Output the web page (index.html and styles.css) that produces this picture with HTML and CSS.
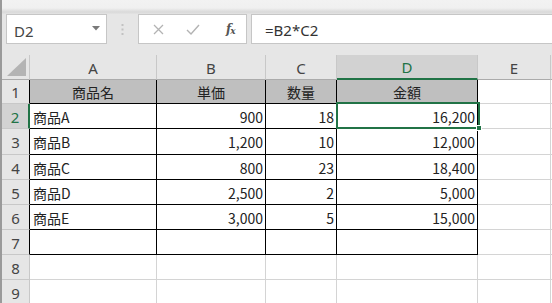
FILE: index.html
```html
<!DOCTYPE html>
<html lang="ja">
<head>
<meta charset="utf-8">
<link rel="stylesheet" href="styles.css">
</head>
<body>
<div class="app">
  <div class="topband"></div>
  <div class="fbar">
    <div class="namebox">
      <span class="nb-text">D2</span>
      <svg class="nb-arrow" width="8" height="5" viewBox="0 0 8 5"><path d="M0 0H8L4 4.5Z" fill="#7a7a7a"/></svg>
    </div>
    <div class="dots">
      <svg width="3" height="11" viewBox="0 0 3 11"><rect x="0.5" y="0" width="2" height="2" fill="#c2c2c2"/><rect x="0.5" y="4.5" width="2" height="2" fill="#c2c2c2"/><rect x="0.5" y="9" width="2" height="2" fill="#c2c2c2"/></svg>
    </div>
    <div class="fnbox">
      <svg class="fn-x" width="11" height="11" viewBox="0 0 11 11"><path d="M1 1L10 10M10 1L1 10" stroke="#b3b3b3" stroke-width="1.3"/></svg>
      <svg class="fn-check" width="14" height="11" viewBox="0 0 14 11"><path d="M1 6L5 10L13 1" stroke="#b3b3b3" stroke-width="1.4" fill="none"/></svg>
      <span class="fn-fx">f<sub>x</sub></span>
    </div>
    <div class="formula">=B2*C2</div>
  </div>
  <div class="sheet">
    <div class="grid">
      <div class="c corner"><svg width="19" height="18" viewBox="0 0 19 18"><path d="M19 0V18H0Z" fill="#b4b4b4"/></svg></div>
      <div class="c ch">A</div>
      <div class="c ch">B</div>
      <div class="c ch">C</div>
      <div class="c ch sel">D</div>
      <div class="c ch">E</div>
      <div class="c ch last"></div>

      <div class="c rh tb">1</div>
      <div class="c t hd">商品名</div>
      <div class="c t hd">単価</div>
      <div class="c t hd">数量</div>
      <div class="c t hd dsel">金額</div>
      <div class="c g"></div>
      <div class="c g last"></div>

      <div class="c rh rsel">2</div>
      <div class="c t l">商品A</div>
      <div class="c t r">900</div>
      <div class="c t r">18</div>
      <div class="c t r">16,200</div>
      <div class="c g"></div>
      <div class="c g last"></div>

      <div class="c rh tb">3</div>
      <div class="c t l">商品B</div>
      <div class="c t r">1,200</div>
      <div class="c t r">10</div>
      <div class="c t r">12,000</div>
      <div class="c g"></div>
      <div class="c g last"></div>

      <div class="c rh tb">4</div>
      <div class="c t l">商品C</div>
      <div class="c t r">800</div>
      <div class="c t r">23</div>
      <div class="c t r">18,400</div>
      <div class="c g"></div>
      <div class="c g last"></div>

      <div class="c rh tb">5</div>
      <div class="c t l">商品D</div>
      <div class="c t r">2,500</div>
      <div class="c t r">2</div>
      <div class="c t r">5,000</div>
      <div class="c g"></div>
      <div class="c g last"></div>

      <div class="c rh tb">6</div>
      <div class="c t l">商品E</div>
      <div class="c t r">3,000</div>
      <div class="c t r">5</div>
      <div class="c t r">15,000</div>
      <div class="c g"></div>
      <div class="c g last"></div>

      <div class="c rh tb">7</div>
      <div class="c t"></div>
      <div class="c t"></div>
      <div class="c t"></div>
      <div class="c t"></div>
      <div class="c g"></div>
      <div class="c g last"></div>

      <div class="c rh">8</div>
      <div class="c g"></div>
      <div class="c g"></div>
      <div class="c g"></div>
      <div class="c g"></div>
      <div class="c g"></div>
      <div class="c g last"></div>

      <div class="c rh">9</div>
      <div class="c g"></div>
      <div class="c g"></div>
      <div class="c g"></div>
      <div class="c g"></div>
      <div class="c g"></div>
      <div class="c g last"></div>
    </div>
    <div class="selbox"></div>
    <div class="handle"></div>
  </div>
</div>
</body>
</html>
```

FILE: styles.css
```css
* { box-sizing: border-box; }
html, body { margin: 0; padding: 0; }
body {
  width: 552px;
  height: 303px;
  overflow: hidden;
  background: #ffffff;
  font-family: "Noto Sans CJK JP", "Noto Sans", sans-serif;
  color: #000;
}
.app {
  width: 552px;
  height: 303px;
  background: #e6e6e6;
  border-left: 2px solid #9a9a9a;
  display: flex;
  flex-direction: column;
  overflow: hidden;
}
.topband {
  height: 14px;
  flex: none;
  background: linear-gradient(#f2f2f2 0px, #f0f0f0 8px, #d9d9d9 12px, #e3e3e3 14px);
}
.fbar {
  height: 30px;
  flex: none;
  display: flex;
  align-items: stretch;
  background: #e6e6e6;
}
.namebox {
  margin-left: 4px;
  width: 101px;
  background: #fff;
  border: 1px solid #c6c6c6;
  display: flex;
  align-items: center;
  justify-content: space-between;
  padding: 0 6px 0 7px;
}
.nb-text {
  font-family: "Noto Sans", sans-serif;
  font-size: 15px;
  color: #444;
  padding-top: 3px;
}
.nb-arrow { margin-top: -2px; }
.dots {
  width: 31px;
  display: flex;
  align-items: center;
  justify-content: center;
}
.fnbox {
  width: 109px;
  background: #fff;
  border: 1px solid #c6c6c6;
  display: flex;
  align-items: center;
  padding-left: 14px;
}
.fn-x { margin-right: 22px; }
.fn-check { margin-right: 26px; }
.fn-fx {
  font-family: "DejaVu Serif", "Liberation Serif", serif;
  font-style: italic;
  font-size: 12px;
  color: #555;
  font-weight: bold;
  letter-spacing: -1px;
}
.fn-fx sub { font-size: 9px; vertical-align: -1px; }
.formula {
  margin-left: 4px;
  flex: 1;
  background: #fff;
  border: 1px solid #c6c6c6;
  border-right: none;
  font-family: "Noto Sans", sans-serif;
  font-size: 15px;
  color: #333;
  display: flex;
  align-items: center;
  padding-left: 13px;
  padding-top: 2px;
}
.sheet {
  margin-top: 11px;
  position: relative;
  flex: none;
}
.grid {
  display: grid;
  grid-template-columns: 28px 127px 109px 71px 141px 73px 2px;
  grid-template-rows: 25px 24px 25px 26px 25px 25px 25px 25px 25px 25px;
}
.c {
  border-right: 1px solid #d4d4d4;
  border-bottom: 1px solid #d4d4d4;
  font-size: 14px;
  display: flex;
  align-items: center;
  white-space: nowrap;
  overflow: hidden;
}
.corner {
  background: #e6e6e6;
  border-right: 1px solid #c8c8c8;
  border-bottom: 1px solid #ababab;
  align-items: flex-end;
  justify-content: flex-end;
  padding: 0 3px 3px 0;
}
.ch {
  background: #e6e6e6;
  border-right: 1px solid #c8c8c8;
  border-bottom: 1px solid #ababab;
  justify-content: center;
  font-family: "Noto Sans", sans-serif;
  font-size: 15px;
  color: #444;
  padding-top: 1px;
}
.ch.sel {
  background: #d2d2d2;
  color: #217346;
  border-bottom: 2px solid #217346;
}
.ch.last { border-right: none; }
.rh {
  background: #e6e6e6;
  border-right: 1px solid #c8c8c8;
  border-bottom: 1px solid #c8c8c8;
  justify-content: center;
  font-family: "Noto Sans", sans-serif;
  font-size: 15px;
  color: #444;
  padding-top: 1px;
}
.rh.tb { border-right: 1px solid #000; }
.rh.rsel {
  background: #d2d2d2;
  color: #217346;
  border-right: 2px solid #217346;
}
.t {
  background: #fff;
  border-right: 1px solid #000;
  border-bottom: 1px solid #000;
  color: #222;
}
.t.hd {
  background: #bfbfbf;
  justify-content: center;
  padding-top: 1px;
}
.t.dsel {}
.t.l { padding-left: 3px; padding-top: 1px; }
.t.r { justify-content: flex-end; padding-right: 2px; padding-top: 1px; }
.g { background: #fff; }
.g.last { border-right: none; }
.selbox {
  position: absolute;
  left: 334px;
  top: 47px;
  width: 144px;
  height: 27px;
  border: 2px solid #217346;
  pointer-events: none;
}
.handle {
  position: absolute;
  left: 474px;
  top: 70px;
  width: 6px;
  height: 6px;
  background: #217346;
  border: 1px solid #fff;
}
```
